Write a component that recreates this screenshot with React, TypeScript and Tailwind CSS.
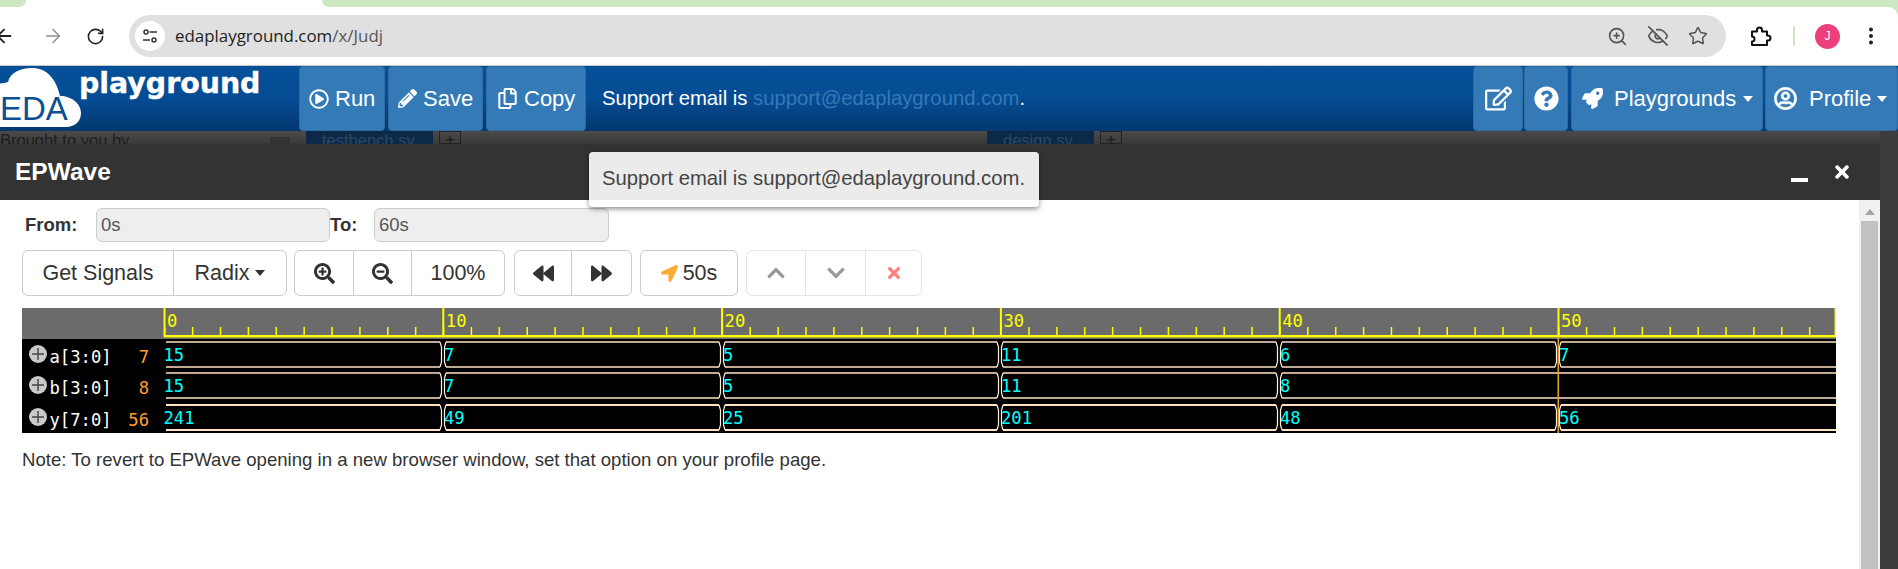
import { ArrowLeft, ArrowRight, RotateCw, ZoomIn, EyeOff, Star, EllipsisVertical } from "lucide-react";
import {
    FaRegPlayCircle, FaPencilAlt, FaRegCopy, FaRegEdit, FaQuestionCircle, FaRocket, FaRegUserCircle,
    FaSearchPlus, FaSearchMinus, FaBackward, FaForward, FaLocationArrow, FaChevronUp, FaChevronDown, FaTimes,
} from "react-icons/fa";
import type { ReactNode } from "react";

const sans = "font-['Liberation_Sans',Arial,sans-serif]";

const Caret = ({ className = "" }: { className?: string }) => (
    <span className={`inline-block h-0 w-0 border-x-[5.5px] border-t-[6px] border-x-transparent border-t-current ${className}`} />
);

const NavButton = ({ className, children }: { className: string; children: ReactNode }) => (
    <div className={`flex h-full items-center rounded-[4px] border border-[#2e6da4] bg-[#337ab7] text-[22px] text-white ${className}`}>
        {children}
    </div>
);

const ToolButton = ({ className, children }: { className: string; children: ReactNode }) => (
    <div className={`flex h-full items-center justify-center border-r border-[#ccc] last:border-r-0 ${className}`}>{children}</div>
);

const Group = ({ className = "", children }: { className?: string; children: ReactNode }) => (
    <div className={`flex h-full rounded-[6px] border border-[#ccc] bg-white text-[21.5px] text-[#333] ${className}`}>{children}</div>
);

const Logo = () => (
    <svg width="290" height="65" viewBox="0 0 290 65" className="shrink-0">
        <path
            d="M-10 61V22C-2 16 4 18 8 16C10 6 22 2 32 2C46 2 56 12 60 30C72 30 81 38 81 47C81 56 74 61 66 61Z"
            fill="#fff"
        />
        <text x="0" y="54" fontSize="33" fill="#0b4f92" fontFamily="Liberation Sans, sans-serif">EDA</text>
        <text x="79" y="27" fontSize="28.4" fontWeight="700" fill="#fff" stroke="#fff" strokeWidth="0.4" fontFamily="DejaVu Sans, sans-serif">playground</text>
    </svg>
);

// the wave viewer is a canvas in the real page, so it is one drawing here as well
const ticks = Array.from({ length: 60 }, (_, i) => i);
const majors = [0, 1, 2, 3, 4, 5];
const mono = "DejaVu Sans Mono, monospace";
const X0 = 142;
const STEP = 278.8;

type Row = { name: string; now: string; top: number; vals: string[]; thick?: boolean };

const rows: Row[] = [
    { name: "a[3:0]", now: "7", top: 34, vals: ["15", "7", "5", "11", "6", "7"] },
    { name: "b[3:0]", now: "8", top: 65, vals: ["15", "7", "5", "11", "8"] },
    { name: "y[7:0]", now: "56", top: 97, vals: ["241", "49", "25", "201", "48", "56"], thick: true },
];

const WaveRow = ({ row }: { row: Row }) => {
    const top = row.top;
    const bot = top + 25;
    const mid = top + 13;
    const edges = row.vals.map((_, i) => Math.round(X0 + i * STEP));
    const w = row.thick ? 2 : 1.4;
    return (
        <g>
            <circle cx="16" cy={mid - 1} r="9" fill="#c9c9c9" />
            <path d={`M10 ${mid - 1}H22M16 ${mid - 7}V${mid + 5}`} stroke="#444" strokeWidth="1.4" />
            <text x="27.5" y={top + 20.5} fontSize="17.2" fill="#fff" fontFamily={mono}>{row.name}</text>
            <text x="127" y={top + 20.5} fontSize="17.2" fill="#ff9f2a" textAnchor="end" fontFamily={mono}>{row.now}</text>
            {edges.map((x, i) => {
                const start = i === 0 ? x + 2 : x + 3;
                const end = i + 1 < edges.length ? edges[i + 1] - 3 : 1814;
                return (
                    <g key={i}>
                        <path d={`M${start} ${top}H${end}M${start} ${bot}H${end}`} stroke="#ffe2c4" strokeWidth={w} />
                        {i > 0 && (
                            <path
                                d={`M${x - 3} ${top}L${x - 1.5} ${top + 5}V${bot - 5}L${x - 3} ${bot}M${x + 3} ${top}L${x + 1.5} ${top + 5}V${bot - 5}L${x + 3} ${bot}`}
                                stroke="#fff0e0"
                                strokeWidth="1.2"
                                fill="none"
                            />
                        )}
                        <text x={i === 0 ? x - 0.5 : x + 1} y={top + 18.5} fontSize="17.2" fill="#00ffff" fontFamily={mono}>
                            {row.vals[i]}
                        </text>
                    </g>
                );
            })}
        </g>
    );
};

const Wave = () => (
    <svg width="1814" height="125" viewBox="0 0 1814 125" className="mt-3 block">
        <rect width="1814" height="125" fill="#000" />
        <rect width="1814" height="31" fill="#6b6b6b" />
        {ticks.map((i) => (
            <rect key={i} x={X0 + i * (STEP / 10)} y="19" width="1.5" height="9" fill="#ffff00" />
        ))}
        <rect x={X0} y="27" width="1672" height="2.4" fill="#ffff00" />
        {majors.map((i) => (
            <g key={i}>
                <rect x={X0 + i * STEP - 0.5} y="0" width="2" height="29" fill="#ffff00" />
                <text x={X0 + i * STEP + 3} y="19" fontSize="17.2" fill="#ffff00" fontFamily={mono}>
                    {i === 0 ? "0" : `${i * 10}`}
                </text>
            </g>
        ))}
        <rect x="1812.5" y="0" width="1.5" height="29" fill="#ffff00" />
        {rows.map((r) => (
            <WaveRow key={r.name} row={r} />
        ))}
        <rect x={X0 + 5 * STEP - 0.5} y="29" width="1.6" height="96" fill="#e8a030" />
    </svg>
);

export default function App() {
    return (
        <div className={`relative flex h-[569px] w-[1898px] flex-col overflow-hidden bg-white ${sans}`}>
            {/* browser chrome */}
            <div className="bg-[#cbe8c0]">
                <div className="flex h-[7px] bg-white">
                    <div className="w-[26px] rounded-br-[10px] bg-[#cbe8c0]" />
                    <div className="ml-[296px] flex-1 rounded-bl-[10px] bg-[#cbe8c0]" />
                </div>
                <div className="flex h-[59px] items-center rounded-tr-[10px] border-b border-[#c8c8c8] bg-white">
                    <ArrowLeft size={22} className="ml-[-7px] text-[#222]" strokeWidth={2} />
                    <ArrowRight size={22} className="ml-[27px] text-[#8e8e8e]" strokeWidth={1.6} />
                    <RotateCw size={19} className="ml-[22px] text-[#222]" strokeWidth={2} />
                    <div className="ml-[24px] flex h-[42px] w-[1597px] items-center rounded-full bg-[#e0e0e0] pl-[6px] pr-[18px]">
                        <div className="flex h-[30px] w-[30px] items-center justify-center rounded-full bg-white">
                            <svg width="16" height="16" viewBox="0 0 16 16" fill="none" stroke="#333" strokeWidth="1.5">
                                <circle cx="4" cy="4" r="2" />
                                <path d="M7.5 4H15M1 12H8" />
                                <circle cx="12" cy="12" r="2" />
                            </svg>
                        </div>
                        <span className="ml-[10px] font-['Open_Sans',sans-serif] text-[16.9px] text-[#555]">
                            <span className="text-[#222]">edaplayground.com</span>/x/Judj
                        </span>
                        <div className="ml-auto flex items-center text-[#555]">
                            <ZoomIn size={21} strokeWidth={1.8} />
                            <EyeOff size={22} strokeWidth={1.8} className="ml-[19px]" />
                            <Star size={20} strokeWidth={1.8} className="ml-[19px]" />
                        </div>
                    </div>
                    <svg width="24" height="24" viewBox="0 0 24 24" fill="none" stroke="#111" strokeWidth="2" strokeLinejoin="round" className="ml-[22px]">
                        <path d="M4 7.5h5V6a2.5 2.5 0 0 1 5 0v1.5h5v4h1a2.5 2.5 0 0 1 0 5h-1v4.5H4v-3.5a2.5 2.5 0 0 0 0-5z" />
                    </svg>
                    <div className="ml-[21px] h-[20px] w-[2px] bg-[#cbe8c0]" />
                    <div className="ml-[20px] flex h-[25px] w-[25px] items-center justify-center rounded-full bg-[#ee3f7d] text-[12px] text-white">J</div>
                    <EllipsisVertical size={22} className="ml-[20px] text-[#222]" strokeWidth={2.4} />
                </div>
            </div>

            {/* site navbar */}
            <div className="flex h-[65px] shrink-0 bg-gradient-to-b from-[#055099] via-[#054c94] to-[#03386f]">
                <div className="w-[299px] shrink-0 overflow-hidden">
                    <Logo />
                </div>
                <div className="flex h-full gap-[3px]">
                    <NavButton className="w-[86px] gap-[6px] pl-[9px]"><FaRegPlayCircle size={20} />Run</NavButton>
                    <NavButton className="w-[95px] gap-[6px] pl-[9px]"><FaPencilAlt size={19} />Save</NavButton>
                    <NavButton className="w-[100px] gap-[6px] pl-[10px]"><FaRegCopy size={21} />Copy</NavButton>
                </div>
                <div className="ml-[16px] flex items-center pb-[1px] text-[20.3px] text-white">
                    Support email is&nbsp;<span className="text-[#337ab7]">support@edaplayground.com</span>.
                </div>
                <div className="ml-auto flex h-full">
                    <NavButton className="w-[50px] justify-center"><FaRegEdit size={27} /></NavButton>
                    <NavButton className="ml-px w-[44px] justify-center"><FaQuestionCircle size={25} /></NavButton>
                    <NavButton className="ml-[3px] w-[192px] pl-[10px]">
                        <FaRocket size={21} />
                        <span className="ml-[11px]">Playgrounds</span>
                        <Caret className="ml-[7px]" />
                    </NavButton>
                    <NavButton className="ml-[2px] w-[133px] pl-[8px]">
                        <FaRegUserCircle size={23} stroke="currentColor" strokeWidth={14} />
                        <span className="ml-[12px]">Profile</span>
                        <Caret className="ml-[6px]" />
                    </NavButton>
                </div>
            </div>

            <div className="flex min-h-0 flex-1 bg-[#3c3c3c]">
                <div className="flex w-[1880px] flex-col">
                    {/* page behind the dialog, dimmed */}
                    <div className="flex h-[13px] shrink-0 overflow-hidden bg-gradient-to-b from-[#4a4a4a] to-[#3a3a3a] text-[16.5px] leading-[18px] text-[#1d1d1d]">
                        <span className="w-[270px] shrink-0">Brought to you by</span>
                        <div className="mt-[6px] h-[7px] w-[20px] shrink-0 bg-[#333]" />
                        <div className="ml-[16px] w-[127px] shrink-0 bg-[#0c2a48] pl-[16px] text-[#2b4764]">testbench.sv</div>
                        <div className="ml-[6px] h-[13px] w-[22px] shrink-0 border border-[#222] text-center leading-[14px]">+</div>
                        <div className="ml-[526px] w-[107px] shrink-0 bg-[#0c2a48] pl-[16px] text-[#2b4764]">design.sv</div>
                        <div className="ml-[6px] h-[13px] w-[22px] shrink-0 border border-[#222] text-center leading-[14px]">+</div>
                    </div>

                    {/* dialog */}
                    <div className="flex h-[56px] shrink-0 items-center justify-between bg-[#333] pl-[15px] pr-[28px] text-white">
                        <span className="text-[24.5px] font-bold">EPWave</span>
                        <div className="flex items-center gap-[24px]">
                            <div className="mt-[16px] h-[3.5px] w-[17px] bg-white" />
                            <FaTimes size={20} className="mb-[1px]" />
                        </div>
                    </div>
                    <div className="flex min-h-0 flex-1 bg-white">
                        <div className="min-w-0 flex-1 pl-[22px] pt-[8px] text-[#333]">
                            <div className="flex h-[34px] items-center text-[18.5px]">
                                <label className="ml-[3px] w-[71px] font-bold">From:</label>
                                <div className="flex h-full w-[234px] items-center rounded-[6px] border border-[#ccc] bg-[#eee] pl-[4px] text-[#555]">0s</div>
                                <label className="w-[44px] font-bold">To:</label>
                                <div className="flex h-full w-[235px] items-center rounded-[6px] border border-[#ccc] bg-[#eee] pl-[4px] text-[#555]">60s</div>
                            </div>
                            <div className="mt-[8px] flex h-[46px]">
                                <Group>
                                    <ToolButton className="w-[151px]">Get Signals</ToolButton>
                                    <ToolButton className="w-[112px] gap-[6px]">Radix<Caret /></ToolButton>
                                </Group>
                                <Group className="ml-[7px]">
                                    <ToolButton className="w-[59px]"><FaSearchPlus size={21} /></ToolButton>
                                    <ToolButton className="w-[58px]"><FaSearchMinus size={21} /></ToolButton>
                                    <ToolButton className="w-[92px]">100%</ToolButton>
                                </Group>
                                <Group className="ml-[9px]">
                                    <ToolButton className="w-[57px]"><FaBackward size={21} /></ToolButton>
                                    <ToolButton className="w-[59px]"><FaForward size={21} /></ToolButton>
                                </Group>
                                <Group className="ml-[8px]">
                                    <ToolButton className="w-[96px] gap-[5px]"><FaLocationArrow size={17} className="text-[#ffaa33]" />50s</ToolButton>
                                </Group>
                                <Group className="ml-[8px] opacity-50">
                                    <ToolButton className="w-[59px]"><FaChevronUp size={20} /></ToolButton>
                                    <ToolButton className="w-[60px]"><FaChevronDown size={20} /></ToolButton>
                                    <ToolButton className="w-[55px]"><FaTimes size={18} className="text-[#ff0000]" /></ToolButton>
                                </Group>
                            </div>
                            <Wave />
                            <p className="mt-[13px] text-[18.6px]">
                                Note: To revert to EPWave opening in a new browser window, set that option on your profile page.
                            </p>
                        </div>
                        <div className="flex w-[21px] shrink-0 flex-col items-center bg-[#f1f1f1]">
                            <svg width="10" height="6" viewBox="0 0 10 6" className="mt-[9px]"><path d="M5 0L10 6H0Z" fill="#a3a3a3" /></svg>
                            <div className="mt-[6px] w-[17px] flex-1 bg-[#c1c1c1]" />
                        </div>
                    </div>
                </div>
            </div>

            {/* tooltip on the support email */}
            <div className="absolute left-[589px] top-[152px] flex h-[55px] w-[450px] items-center rounded-[4px] bg-white/90 pb-[3px] pl-[13px] text-[20.3px] text-[#444] shadow-[0_2px_5px_rgba(0,0,0,0.45)]">
                Support email is support@edaplayground.com.
            </div>
        </div>
    );
}
